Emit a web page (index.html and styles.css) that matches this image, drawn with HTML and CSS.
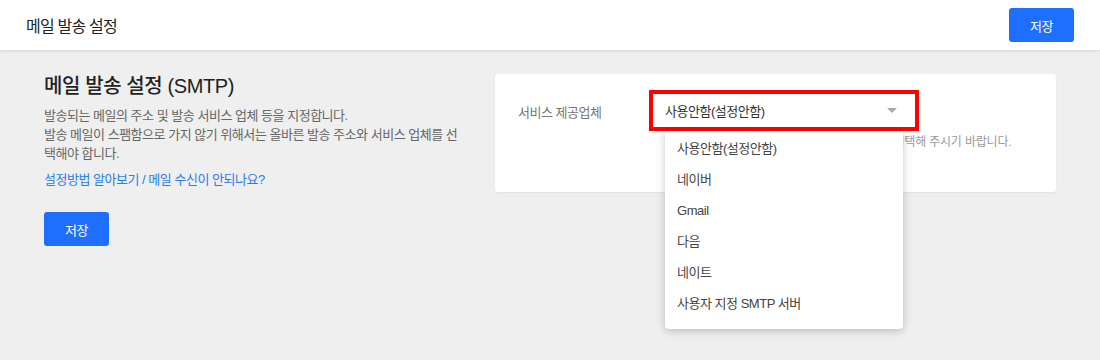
FILE: index.html
```html
<!DOCTYPE html>
<html lang="ko">
<head>
    <meta charset="UTF-8">
    <meta name="viewport" content="width=device-width, initial-scale=1.0">
    <title>메일 발송 설정</title>
    <link rel="stylesheet" href="styles.css">
</head>
<body>
    <header class="topbar">
        <h1 class="topbar-title">메일 발송 설정</h1>
        <button class="btn">저장</button>
    </header>

    <main class="content">
        <section class="intro">
            <h2 class="intro-title">메일 발송 설정 (SMTP)</h2>
            <p class="intro-desc">
                발송되는 메일의 주소 및 발송 서비스 업체 등을 지정합니다.<br>
                발송 메일이 스팸함으로 가지 않기 위해서는 올바른 발송 주소와 서비스 업체를 선택해야 합니다.
            </p>
            <a class="intro-link" href="#">설정방법 알아보기 / 메일 수신이 안되나요?</a>
            <div class="intro-actions">
                <button class="btn">저장</button>
            </div>
        </section>

        <section class="card">
            <div class="field-row">
                <label class="field-label">서비스 제공업체</label>
                <div class="field">
                    <div class="select-box">
                        <div class="select">
                            <span>사용안함(설정안함)</span>
                            <span class="caret"></span>
                        </div>
                        <ul class="dropdown">
                            <li>사용안함(설정안함)</li>
                            <li>네이버</li>
                            <li>Gmail</li>
                            <li>다음</li>
                            <li>네이트</li>
                            <li>사용자 지정 SMTP 서버</li>
                        </ul>
                    </div>
                    <p class="field-hint">메일 발송에 사용할 메일 서비스 제공업체를 꼭 선택해 주시기 바랍니다.</p>
                </div>
            </div>
        </section>
    </main>
</body>
</html>
```

FILE: styles.css
```css
html, body {
    height: 100%;
}
body {
    margin: 0;
    background-color: #efefef;
    font-family: 'Liberation Sans', 'Noto Sans CJK KR', sans-serif;
    color: #333;
    letter-spacing: -0.03em;
}
.topbar {
    display: flex;
    align-items: center;
    justify-content: space-between;
    height: 50px;
    padding: 0 26px;
    background-color: white;
    box-shadow: 0 1px 3px rgba(0,0,0,0.12);
}
.topbar-title {
    margin: 0;
    font-size: 16px;
    font-weight: normal;
    color: #222;
    letter-spacing: -0.05em;
}
.btn {
    width: 65px;
    height: 34px;
    background-color: #1f6fff;
    color: white;
    border: none;
    border-radius: 3px;
    font-family: inherit;
    font-size: 13px;
    letter-spacing: inherit;
    cursor: pointer;
}
.btn:hover {
    background-color: #0f5de6;
}
.content {
    display: flex;
    justify-content: space-between;
    min-height: calc(100% - 50px);
    box-sizing: border-box;
    padding: 24px 44px 0;
}
.intro {
    width: 415px;
}
.intro-title {
    margin: 0;
    font-size: 20px;
    font-weight: 500;
    color: #222;
    line-height: 24px;
    letter-spacing: -0.02em;
}
.intro-desc {
    margin: 8px 0 0;
    font-size: 13px;
    line-height: 19px;
    color: #666;
}
.intro-link {
    display: block;
    margin-top: 7px;
    font-size: 13px;
    line-height: 19px;
    color: #2a7cf0;
    text-decoration: none;
}
.intro-actions {
    margin-top: 23px;
}
.card {
    width: 561px;
    box-sizing: border-box;
    align-self: flex-start;
    padding: 16px 23px 42px;
    background-color: white;
    border-radius: 3px;
    box-shadow: 0 1px 2px rgba(0,0,0,0.06);
}
.field-row {
    display: flex;
}
.field-label {
    width: 131px;
    padding-top: 13px;
    font-size: 13px;
    line-height: 19px;
    color: #777;
}
.select-box {
    position: relative;
    width: 262px;
    height: 33px;
    border: 4px solid #f00;
}
.select {
    display: flex;
    align-items: center;
    justify-content: space-between;
    height: 100%;
    padding: 0 18px 0 12px;
    font-size: 13px;
    color: #333;
}
.caret {
    width: 0;
    height: 0;
    border-left: 5px solid transparent;
    border-right: 5px solid transparent;
    border-top: 5px solid #aaa;
}
.dropdown {
    position: absolute;
    top: 100%;
    left: 12px;
    width: 238px;
    margin: 4px 0 0;
    padding: 2px 0 10px;
    list-style: none;
    background-color: white;
    border-radius: 0 0 4px 4px;
    box-shadow: 0 2px 8px rgba(0,0,0,0.22);
}
.dropdown li {
    height: 31px;
    line-height: 31px;
    padding: 0 12px;
    font-size: 13px;
    color: #444;
}
.field-hint {
    margin: 3px 0 0 16px;
    font-size: 12px;
    line-height: 16px;
    color: #999;
    letter-spacing: -0.015em;
}
```
